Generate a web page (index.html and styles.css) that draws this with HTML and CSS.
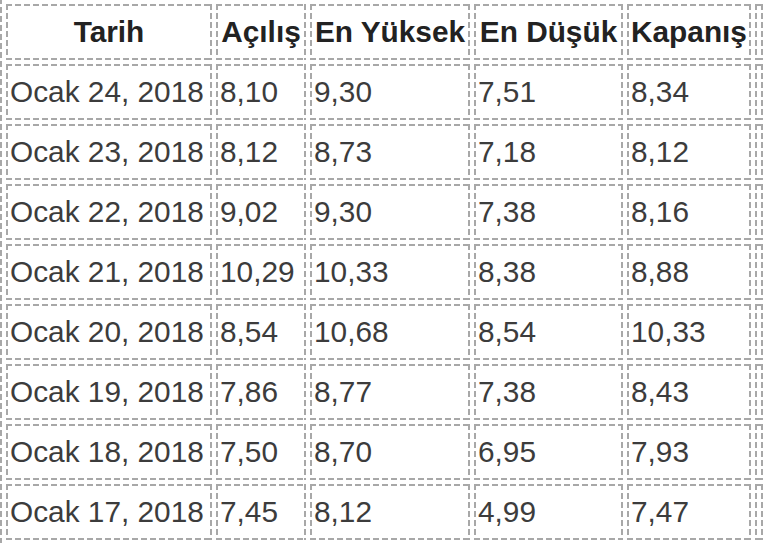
FILE: index.html
```html
<!DOCTYPE html>
<html lang="tr">
<head>
<meta charset="utf-8">
<title>Fiyat Tablosu</title>
<link rel="stylesheet" href="styles.css">
</head>
<body>
<table class="prices">
  <thead>
    <tr>
      <th class="c-date">Tarih</th>
      <th class="c-open">Açılış</th>
      <th class="c-high">En Yüksek</th>
      <th class="c-low">En Düşük</th>
      <th class="c-close">Kapanış</th>
      <th class="c-extra"></th>
    </tr>
  </thead>
  <tbody>
    <tr><td>Ocak 24, 2018</td><td>8,10</td><td>9,30</td><td>7,51</td><td>8,34</td><td></td></tr>
    <tr><td>Ocak 23, 2018</td><td>8,12</td><td>8,73</td><td>7,18</td><td>8,12</td><td></td></tr>
    <tr><td>Ocak 22, 2018</td><td>9,02</td><td>9,30</td><td>7,38</td><td>8,16</td><td></td></tr>
    <tr><td>Ocak 21, 2018</td><td>10,29</td><td>10,33</td><td>8,38</td><td>8,88</td><td></td></tr>
    <tr><td>Ocak 20, 2018</td><td>8,54</td><td>10,68</td><td>8,54</td><td>10,33</td><td></td></tr>
    <tr><td>Ocak 19, 2018</td><td>7,86</td><td>8,77</td><td>7,38</td><td>8,43</td><td></td></tr>
    <tr><td>Ocak 18, 2018</td><td>7,50</td><td>8,70</td><td>6,95</td><td>7,93</td><td></td></tr>
    <tr><td>Ocak 17, 2018</td><td>7,45</td><td>8,12</td><td>4,99</td><td>7,47</td><td></td></tr>
  </tbody>
</table>
</body>
</html>
```
FILE: styles.css
```css
html, body {
  margin: 0;
  padding: 0;
  background: #ffffff;
  overflow: hidden;
}

.prices {
  margin-top: -2px;
  border-collapse: separate;
  border-spacing: 4px;
  border: 2px solid transparent;
  border-right: none;
  font-family: "Liberation Sans", Arial, sans-serif;
  font-size: 29.8px;
  color: #3c3c3c;
  background-image:
    repeating-linear-gradient(to bottom, #a8a8a8 0 6px, transparent 6px 9px),
    repeating-linear-gradient(to right, #a8a8a8 0 6px, transparent 6px 9px);
  background-size: 2px 100%, 100% 2px;
  background-position: left top, left top;
  background-repeat: no-repeat;
  background-origin: border-box;
}

.prices th,
.prices td {
  box-sizing: border-box;
  height: 56px;
  padding: 0 2px;
  border: 2px solid transparent;
  vertical-align: middle;
  white-space: nowrap;
  background-image:
    repeating-linear-gradient(to right, #a8a8a8 0 6px, transparent 6px 9px),
    repeating-linear-gradient(to right, #a8a8a8 0 6px, transparent 6px 9px),
    repeating-linear-gradient(to bottom, #a8a8a8 0 6px, transparent 6px 9px),
    repeating-linear-gradient(to bottom, #a8a8a8 0 6px, transparent 6px 9px);
  background-size: 100% 2px, 100% 2px, 2px 100%, 2px 100%;
  background-position: left top, left bottom, left top, right top;
  background-repeat: no-repeat;
  background-origin: border-box;
}

.prices th {
  font-weight: bold;
  color: #222222;
  text-align: center;
}

.prices td {
  text-align: left;
}

.c-date { width: 206px; }
.c-open { width: 90px; }
.c-high { width: 160px; }
.c-low { width: 149px; }
.c-close { width: 124px; }
.c-extra { width: 8px; }
```
